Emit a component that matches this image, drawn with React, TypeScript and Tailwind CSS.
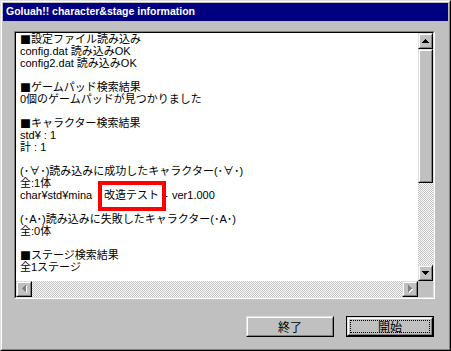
import React from 'react';

const sq = <span className="inline-block align-top h-[12px] leading-[12px] font-['Noto_Sans_CJK_JP',sans-serif]">■</span>;

function Raised({ className, children }: { className: string; children?: React.ReactNode }) {
  return (
    <div className={`border border-t-[#dfdfdf] border-l-[#dfdfdf] border-r-black border-b-black bg-[#c0c0c0] ${className}`}>
      <div className="w-full h-full border border-t-white border-l-white border-r-[#808080] border-b-[#808080] flex items-center justify-center">
        {children}
      </div>
    </div>
  );
}

const UpArrow = () => (
  <svg width="7" height="4" viewBox="0 0 7 4">
    <path d="M3 0h1v1h1v1h1v1h1v1H0V3h1V2h1V1h1z" fill="#000" />
  </svg>
);

const DownArrow = () => (
  <svg width="7" height="4" viewBox="0 0 7 4">
    <path d="M0 0h7v1H6v1H5v1H4v1H3V3H2V2H1V1H0z" fill="#000" />
  </svg>
);

const LeftArrow = () => (
  <svg width="5" height="8" viewBox="0 0 5 8">
    <path d="M4 1h1v7H4V7H3V6H2V5H1V4h1V3h1V2h1z" fill="#fff" />
    <path d="M3 0h1v7H3V6H2V5H1V4H0V3h1V2h1V1h1z" fill="#808080" />
  </svg>
);

const RightArrow = () => (
  <svg width="5" height="8" viewBox="0 0 5 8">
    <path d="M1 1h1v1h1v1h1v1h1v1H4v1H3v1H2v1H1z" fill="#fff" />
    <path d="M0 0h1v1h1v1h1v1h1v1H3v1H2v1H1v1H0z" fill="#808080" />
  </svg>
);

const lines: React.ReactNode[] = [
  <>{sq}設定ファイル読み込み</>,
  'config.dat 読み込みOK',
  'config2.dat 読み込みOK',
  '',
  <>{sq}ゲームパッド検索結果</>,
  '0個のゲームパッドが見つかりました',
  '',
  <>{sq}キャラクター検索結果</>,
  'std¥ : 1',
  '計 : 1',
  '',
  '(･∀･)読み込みに成功したキャラクター(･∀･)',
  '全:1体',
  <>
    <span className="inline-block align-top w-[84px]">char¥std¥mina</span>
    <span className="relative inline-block align-top h-[12px] w-[56px]">
      改造テスト
      <span className="absolute -left-[6px] -right-[6px] -top-[8px] -bottom-[10px] border-4 border-[#ff0000]" />
    </span>
    <span className="inline-block align-top w-[12px] text-center">-</span>
    <span>ver1.000</span>
  </>,
  '',
  '(･A･)読み込みに失敗したキャラクター(･A･)',
  '全:0体',
  '',
  <>{sq}ステージ検索結果</>,
  '全1ステージ',
];

const checker = "bg-[repeating-conic-gradient(#c0c0c0_0_25%,#ffffff_0_50%)] bg-[length:2px_2px]";

export default function App() {
  return (
    <div className="w-[451px] h-[351px] border border-t-[#dfdfdf] border-l-[#dfdfdf] border-r-black border-b-black bg-[#c0c0c0]">
      <div className="h-full border border-t-white border-l-white border-r-[#808080] border-b-[#808080] p-px flex flex-col">
        <div className="h-[18px] bg-[#000080] flex items-center px-[3px] text-white font-bold text-[10.5px] font-['Liberation_Sans',sans-serif]">
          Goluah!! character&amp;stage information
        </div>

        <div className="mt-[10px] ml-[11px] w-[421px] h-[268px] border border-t-[#808080] border-l-[#808080] border-r-white border-b-white">
          <div className="w-full h-full border border-t-black border-l-black border-r-[#dfdfdf] border-b-[#dfdfdf] grid grid-cols-[402px_15px] grid-rows-[248px_16px]">
            <div className="bg-white overflow-hidden pl-[4px] pt-0 text-[11px] text-black font-['Liberation_Sans','Noto_Sans_CJK_JP',sans-serif]">
              {lines.map((l, i) => (
                <div key={i} className="h-[12px] leading-[12px] whitespace-pre">
                  {l}
                </div>
              ))}
            </div>

            <div className="flex flex-col">
              <Raised className="h-[16px]"><UpArrow /></Raised>
              <Raised className="h-[134px]" />
              <div className={`flex-1 ${checker}`} />
              <Raised className="h-[16px]"><DownArrow /></Raised>
            </div>

            <div className="flex">
              <Raised className="w-[16px]"><LeftArrow /></Raised>
              <div className={`flex-1 ${checker}`} />
              <Raised className="w-[16px]"><RightArrow /></Raised>
            </div>
            <div className="bg-[#c0c0c0]" />
          </div>
        </div>

        <div className="mt-[17px] mr-[14px] flex justify-end gap-[12px] text-[12px] text-black font-['Noto_Sans_CJK_JP',sans-serif]">
          <Raised className="w-[88px] h-[21px]">終了</Raised>
          <div className="relative w-[88px] h-[21px] border border-black">
            <Raised className="w-full h-full">開始</Raised>
            <div className="absolute inset-[3px] border border-dotted border-black" />
          </div>
        </div>
      </div>
    </div>
  );
}
